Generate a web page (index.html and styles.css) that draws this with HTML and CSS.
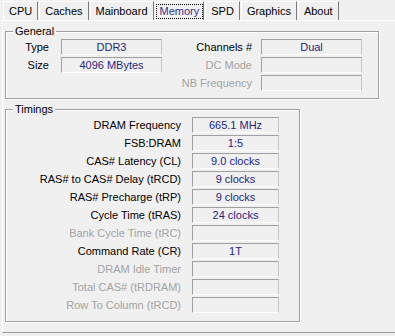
FILE: index.html
```html
<!DOCTYPE html>
<html lang="en">
<head>
  <meta charset="UTF-8">
  <title>CPU-Z - Memory</title>
  <link rel="stylesheet" href="styles.css">
</head>
<body>

  <!-- tab strip -->
  <div class="tabs">
    <div class="tab">CPU</div>
    <div class="tab">Caches</div>
    <div class="tab">Mainboard</div>
    <div class="tab active"><span class="focus">Memory</span></div>
    <div class="tab">SPD</div>
    <div class="tab">Graphics</div>
    <div class="tab">About</div>
  </div>

  <div class="panel">

    <!-- General -->
    <div class="group general">
      <div class="group-title">General</div>
      <div class="general-grid">
        <span class="lbl">Type</span>
        <span class="val">DDR3</span>
        <span class="lbl">Channels #</span>
        <span class="val">Dual</span>

        <span class="lbl">Size</span>
        <span class="val">4096 MBytes</span>
        <span class="lbl off">DC Mode</span>
        <span class="val"></span>

        <span></span>
        <span></span>
        <span class="lbl off">NB Frequency</span>
        <span class="val"></span>
      </div>
    </div>

    <!-- Timings -->
    <div class="group timings">
      <div class="group-title">Timings</div>
      <div class="timings-grid">
        <span class="lbl">DRAM Frequency</span><span class="val">665.1 MHz</span>
        <span class="lbl">FSB:DRAM</span><span class="val">1:5</span>
        <span class="lbl">CAS# Latency (CL)</span><span class="val">9.0 clocks</span>
        <span class="lbl">RAS# to CAS# Delay (tRCD)</span><span class="val">9 clocks</span>
        <span class="lbl">RAS# Precharge (tRP)</span><span class="val">9 clocks</span>
        <span class="lbl">Cycle Time (tRAS)</span><span class="val">24 clocks</span>
        <span class="lbl off">Bank Cycle Time (tRC)</span><span class="val"></span>
        <span class="lbl">Command Rate (CR)</span><span class="val">1T</span>
        <span class="lbl off">DRAM Idle Timer</span><span class="val"></span>
        <span class="lbl off">Total CAS# (tRDRAM)</span><span class="val"></span>
        <span class="lbl off">Row To Column (tRCD)</span><span class="val"></span>
      </div>
    </div>

  </div>

</body>
</html>
```

FILE: styles.css
```css
body {
  font-family: 'Liberation Sans', Arial, sans-serif;
  font-size: 11px;
  margin: 0;
  padding: 0;
  background-color: #f0f0f0;
  color: #000;
  width: 395px;
  height: 336px;
  overflow: hidden;
}

/* tab strip */
.tabs {
  display: flex;
  height: 20px;
  padding-left: 3px;
}

.tab {
  padding: 0 5px;
  line-height: 19px;
  margin-top: 1px;
  margin-right: 1px;
  border-left: 1px solid #fff;
  border-top: 1px solid #fff;
  border-right: 1px solid #7a7a7a;
  color: #000;
}

.tab.active {
  color: #33338f;
  padding: 0 1px;
}

.tab .focus {
  display: inline-block;
  line-height: 13px;
  padding: 0 3px;
  outline: 1px dotted #000;
  outline-offset: 0;
}

/* tab body */
.panel {
  height: 311px;
  margin-left: 2px;
  border-top: 1px solid #fff;
  border-left: 1px solid #fff;
  border-bottom: 1px solid #999;
}

.group {
  border: 1px solid #a0a0a0;
  box-shadow: inset 1px 1px #fff, 1px 1px #fff;
  margin-left: 2px;
}

.group-title {
  display: table;
  margin: -7px 0 0 7px;
  padding: 0 2px;
  line-height: 13px;
  background-color: #f0f0f0;
}

.general {
  width: 372px;
  margin-top: 10px;
  padding-bottom: 7px;
}

.timings {
  width: 293px;
  margin-top: 10px;
  padding-bottom: 8px;
}

.general-grid {
  display: grid;
  grid-template-columns: 55px 101px 99px 101px;
  row-gap: 2px;
  margin-top: 1px;
}

.general-grid .lbl:nth-child(4n+1) {
  padding-right: 12px;
}

.general-grid .lbl:nth-child(4n+3) {
  padding-right: 9px;
}

.timings-grid {
  display: grid;
  grid-template-columns: 186px 87px;
  row-gap: 2px;
  margin-top: 1px;
}

.timings-grid .lbl {
  padding-right: 11px;
}

.lbl {
  text-align: right;
  line-height: 16px;
  white-space: nowrap;
}

.lbl.off {
  color: #a3a3a3;
}

.val {
  height: 14px;
  line-height: 14px;
  text-align: center;
  color: #26267e;
  border: 1px solid;
  border-color: #a0a0a0 #c4c4c4 #fff #a0a0a0;
  white-space: nowrap;
}
```
